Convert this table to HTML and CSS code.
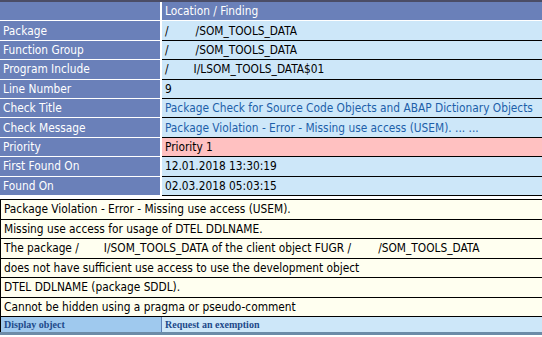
FILE: index.html
```html
<!DOCTYPE html>
<html lang="en">
<head>
  <meta charset="UTF-8">
  <title>Finding Details</title>
  <link rel="stylesheet" href="styles.css">
</head>
<body>
  <div class="top-strip"></div>

  <!-- Location / Finding -->
  <table class="details">
    <tr>
      <th class="label"></th>
      <th class="value head">Location / Finding</th>
    </tr>
    <tr>
      <th class="label">Package</th>
      <td class="value">/<span class="redact"></span>/SOM_TOOLS_DATA</td>
    </tr>
    <tr>
      <th class="label">Function Group</th>
      <td class="value">/<span class="redact"></span>/SOM_TOOLS_DATA</td>
    </tr>
    <tr>
      <th class="label">Program Include</th>
      <td class="value">/<span class="redact short"></span>I/LSOM_TOOLS_DATA$01</td>
    </tr>
    <tr>
      <th class="label">Line Number</th>
      <td class="value">9</td>
    </tr>
    <tr>
      <th class="label">Check Title</th>
      <td class="value link">Package Check for Source Code Objects and ABAP Dictionary Objects</td>
    </tr>
    <tr>
      <th class="label">Check Message</th>
      <td class="value link">Package Violation - Error - Missing use access (USEM). ... ...</td>
    </tr>
    <tr>
      <th class="label">Priority</th>
      <td class="value priority">Priority 1</td>
    </tr>
    <tr>
      <th class="label">First Found On</th>
      <td class="value">12.01.2018 13:30:19</td>
    </tr>
    <tr>
      <th class="label">Found On</th>
      <td class="value">02.03.2018 05:03:15</td>
    </tr>
  </table>

  <!-- Message text -->
  <div class="messages">
    <div class="msg">Package Violation - Error - Missing use access (USEM).</div>
    <div class="msg">Missing use access for usage of DTEL DDLNAME.</div>
    <div class="msg">The package /<span class="redact short"></span>I/SOM_TOOLS_DATA of the client object FUGR /<span class="redact"></span>/SOM_TOOLS_DATA</div>
    <div class="msg">does not have sufficient use access to use the development object</div>
    <div class="msg">DTEL DDLNAME (package SDDL).</div>
    <div class="msg">Cannot be hidden using a pragma or pseudo-comment</div>
    <div class="actions">
      <a class="action first" href="#">Display object</a>
      <a class="action" href="#">Request an exemption</a>
    </div>
  </div>
  <div class="bottom-strip"></div>
</body>
</html>
```

FILE: styles.css
```css
body {
  margin: 0;
  font-family: 'DejaVu Sans Condensed', 'DejaVu Sans', sans-serif;
  font-size: 11.8px;
  color: #000;
  background: #fff;
}

.top-strip {
  height: 2px;
  background: #4b4d66;
}

/* Details table */
.details {
  width: 100%;
  border-collapse: collapse;
}

.details th,
.details td {
  height: 18.4px;
  padding: 0 0 0 3px;
  text-align: left;
  white-space: nowrap;
}

.details .label {
  width: 157px;
  background: #6a80b9;
  color: #fff;
  font-weight: normal;
  border-right: 2px solid #fff;
  border-bottom: 1px solid #fff;
}

.details .value {
  background: #cde7f9;
  border-bottom: 1px solid #000;
}

.details .value.head {
  background: #6a80b9;
  color: #fff;
  font-weight: normal;
  border-bottom: 1px solid #fff;
}

.details .value.link {
  color: #1d5fa9;
}

.details .value.priority {
  background: #ffc1c1;
}

.redact {
  display: inline-block;
  width: 27px;
}

.redact.short {
  width: 25px;
}

/* Message block */
.messages {
  margin-top: 3px;
  border-left: 1px solid #000;
  background: #fffff0;
}

.msg {
  height: 18.6px;
  line-height: 18.6px;
  padding-left: 3px;
  border-top: 1px solid #000;
  white-space: nowrap;
}

.actions {
  display: flex;
  height: 15px;
  border-top: 1px solid #000;
  background: #cde7f9;
}

.action {
  padding-left: 3px;
  font-family: 'Liberation Serif', serif;
  font-size: 10px;
  font-weight: bold;
  line-height: 15px;
  color: #1d4a8a;
  text-decoration: none;
}

.action.first {
  width: 157px;
  background: #9fc9ee;
  border-right: 1px solid #5c7fb5;
}

.bottom-strip {
  height: 3px;
  background: #6d8ca8;
}
```
